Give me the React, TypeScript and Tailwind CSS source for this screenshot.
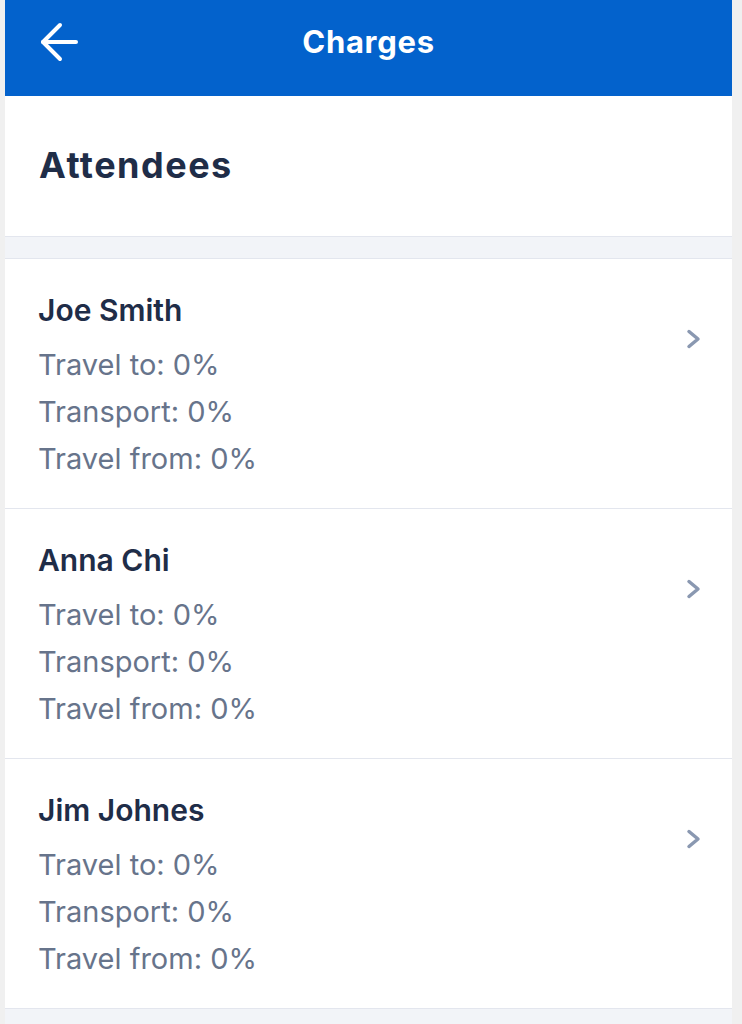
const attendees = [
  { name: "Joe Smith", travelTo: 0, transport: 0, travelFrom: 0 },
  { name: "Anna Chi", travelTo: 0, transport: 0, travelFrom: 0 },
  { name: "Jim Johnes", travelTo: 0, transport: 0, travelFrom: 0 },
];

function BackArrow() {
  return (
    <svg width="40" height="40" viewBox="0 0 40 40" fill="none" stroke="white" strokeWidth="4" strokeLinecap="round" strokeLinejoin="round">
      <path d="M4 20H37" />
      <path d="M21 3L4 20L21 37" />
    </svg>
  );
}

function Chevron() {
  return (
    <svg width="16" height="24" viewBox="0 0 16 24" fill="none" stroke="#8a98b1" strokeWidth="3.5" strokeLinecap="round" strokeLinejoin="round">
      <path d="M3 3.5L12 11L3 18.5" />
    </svg>
  );
}

export default function App() {
  return (
    <div className="min-h-screen bg-[#f0f0f0] px-[5px] pr-[10px] font-['Inter','Noto_Sans',sans-serif]">
      <div className="min-h-screen bg-[#f2f4f8]">
        <header className="grid h-[96px] grid-cols-[1fr_auto_1fr] items-center bg-[#0362cc] pb-[12px]">
          <div className="pl-[34px]">
            <button type="button" aria-label="Back" className="flex">
              <BackArrow />
            </button>
          </div>
          <h1 className="text-[31px] font-bold tracking-[0.7px] text-white">Charges</h1>
          <div />
        </header>

        <section className="flex h-[141px] items-center border-b border-[#e3e6ee] bg-white pl-[34px] pb-[2px]">
          <h2 className="text-[36px] font-bold tracking-[1.5px] text-[#1f2d48]">Attendees</h2>
        </section>

        <div className="h-[22px] border-b border-[#e3e6ee]" />

        <ul>
          {attendees.map((a) => (
            <li key={a.name} className="flex items-start border-b border-[#e3e6ee] bg-white pt-[28px] pb-[26px] pl-[33px] pr-[30px]">
              <div className="flex-1">
                <div className="mb-[7px] text-[30px] leading-[47px] font-semibold text-[#1f2d48]">{a.name}</div>
                <div className="text-[29px] leading-[47px] text-[#67748b]">Travel to: {a.travelTo}%</div>
                <div className="text-[29px] leading-[47px] text-[#67748b]">Transport: {a.transport}%</div>
                <div className="text-[29px] leading-[47px] text-[#67748b]">Travel from: {a.travelFrom}%</div>
              </div>
              <div className="mt-[41px]">
                <Chevron />
              </div>
            </li>
          ))}
        </ul>
      </div>
    </div>
  );
}
